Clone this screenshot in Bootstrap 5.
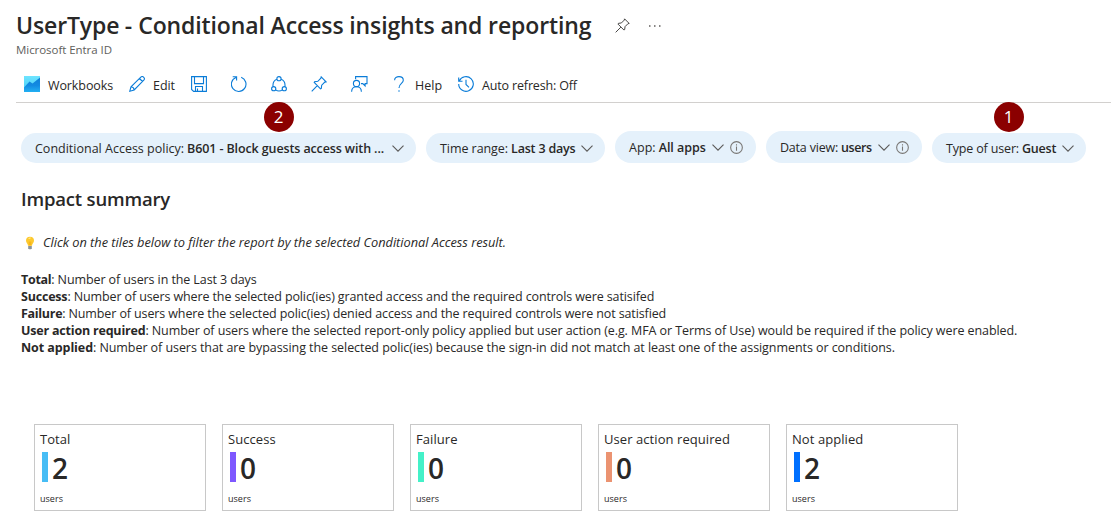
<!DOCTYPE html>
<html lang="en">
<head>
<meta charset="utf-8">
<meta name="viewport" content="width=device-width, initial-scale=1">
<title>UserType - Conditional Access insights and reporting</title>
<link href="https://cdn.jsdelivr.net/npm/bootstrap@5.3.0/dist/css/bootstrap.min.css" rel="stylesheet">
<style>
  body { font-family: "Open Sans", "Noto Sans", sans-serif; font-size: 12.5px; line-height: 17px; color: #292827; background: #fff; overflow: hidden; }
  svg { display: block; flex: none; fill: none; stroke: #0a7cd8; stroke-width: 1.1; }
  .page-head { padding: 8px 0 0 16px; }
  .page-title { font-size: 23px; line-height: 35px; font-weight: 600; letter-spacing: -.13px; margin: 0 24px 0 0; }
  .page-title i { font-style: normal; margin: 0 .5px 0 -.5px; }
  .page-sub { font-size: 11.5px; line-height: 14px; color: #605e5c; letter-spacing: -.05px; }
  .ink { stroke: #3b3a39; stroke-width: 1; }
  .commands { margin-left: 16px; padding-left: 8px; height: 35px; margin-top: 11px; border-bottom: 1px solid #d2d0ce; padding-bottom: 1px; }
  .cmd { background: none; border: 0; padding: 0; height: 32px; color: inherit; width: 40px; gap: 8px; white-space: nowrap; }
  .cmd span { padding-top: 2px; }
  .cmd-wb { width: 105px; letter-spacing: -.1px; }
  .cmd-ed { width: 62px; letter-spacing: -.05px; }
  .cmd-help { width: 67px; }
  .cmd-auto { width: 130px; letter-spacing: -.155px; }
  .filters { margin: 28px 0 0 21px; gap: 10px; height: 32px; }
  .pill { background: #e5f1fb; height: 30px; border-radius: 16px; padding: 0 0 0 14px; white-space: nowrap; position: relative; }
  .pill.tall { height: 32px; }
  .pill b { font-weight: 600; margin-left: 3px; }
  .pill svg { stroke: #5a5958; stroke-width: 1.1; }
  .pill .info { stroke: #797775; stroke-width: 1; margin-left: 6.500px; }
  .p1 { width: 395px; } .p1 b { letter-spacing: -.115px; } .p1 svg { margin-left: 8px; }
  .p2 { width: 179px; letter-spacing: -.06px; } .p2 b { letter-spacing: -.185px; } .p2 svg { margin-left: 5px; }
  .p3 { width: 141px; letter-spacing: .05px; } .p3 b { letter-spacing: -.05px; } .p3 .chev { margin-left: 6px; }
  .p4 { width: 156px; letter-spacing: -.2px; } .p4 b { letter-spacing: -.42px; } .p4 .chev { margin-left: 6px; }
  .p5 { width: 154px; letter-spacing: -.16px; } .p5 b { letter-spacing: -.2px; } .p5 svg { margin-left: 6px; }
  .marker { position: absolute; top: -31.500px; left: 242.500px; width: 30px; height: 30px; border-radius: 50%; background: #8b0000; color: #fff; font-size: 17px; line-height: 29px; text-align: center; letter-spacing: 0; }
  .p5 .marker { left: 61.500px; }
  .summary { padding-left: 21px; }
  .summary h2 { font-size: 18.5px; line-height: 26px; font-weight: 600; letter-spacing: -.18px; margin: 23px 0 0; }
  .tip { margin-top: 22px; font-size: 12.8px; font-style: italic; letter-spacing: -.02px; height: 17px; }
  .tip svg { stroke: none; margin: 0 5px 0 2px; }
  .legend-text { margin-top: 20px; white-space: nowrap; letter-spacing: -.115px; }
  .legend-text b { font-weight: 700; letter-spacing: -.2px; }
  .l1 { letter-spacing: -.1px; } .l1 b, .l3 b { letter-spacing: -.3px; }
  .l4 { letter-spacing: -.077px; } .l5 { letter-spacing: -.065px; } .l5 b { letter-spacing: -.08px; }
  .tiles { margin: 68px 0 0 34px; gap: 16px; }
  .tile { width: 172px; height: 87px; border: 1px solid #c8c8c8; padding: 6px 5px 0; font-size: 13px; letter-spacing: .07px; }
  .tile-val { height: 30px; margin: 4px 0 0 2px; font-size: 28px; font-weight: 600; line-height: 30px; gap: 4px; }
  .tile-val i { width: 6px; height: 30px; }
  .tile-val span { padding-top: 1px; }
  .tile-unit { font-size: 9px; line-height: 12px; margin-top: 11px; letter-spacing: .03px; }
  .c-total { background: #47bdf5; } .c-ok { background: #7e58ff; } .c-fail { background: #44f1c8; } .c-act { background: #eb9371; } .c-na { background: #0070ff; }
</style>
</head>
<body>
<svg class="d-none">
  <symbol id="pin" viewBox="0 0 16 16"><path d="M10.2.9 15.100 5.800 13.800 6.100 10.700 9.200 10.300 12.400 9.500 12.800 3.200 6.500 3.600 5.700 6.800 5.300 9.900 2.200ZM6.300 9.700.700 15.300"/></symbol>
  <symbol id="chev" viewBox="0 0 12 7"><path d="M.5.6 6 6.100 11.500.6"/></symbol>
  <symbol id="info" viewBox="0 0 12 12"><circle cx="6" cy="6" r="5.400"/><path d="M6 5v4M6 3v1.100"/></symbol>
</svg>

<header class="page-head">
  <div class="d-flex align-items-center">
    <h1 class="page-title">UserType <i>-</i> Conditional Access insights and reporting</h1>
    <svg class="ink" width="15" height="15"><use href="#pin"/></svg>
    <svg class="ms-3" width="16" height="4" viewBox="0 0 16 4"><path d="M3 2h1.500M8 2h1.500M13 2h1.500" stroke="#605e5c" stroke-width="1.300"/></svg>
  </div>
  <div class="page-sub">Microsoft Entra ID</div>
</header>

<nav class="commands d-flex">
  <button class="cmd cmd-wb d-flex align-items-center">
    <svg width="16" height="16" viewBox="0 0 16 16"><defs><linearGradient id="wb" x1="0" y1="0" x2="0" y2="1"><stop offset="0" stop-color="#6fe4ff"/><stop offset="1" stop-color="#3fcdf5"/></linearGradient><linearGradient id="wbArea" x1="0" y1="0" x2="0" y2="1"><stop offset="0" stop-color="#0f7fd8"/><stop offset=".55" stop-color="#128be2"/><stop offset="1" stop-color="#22b0f2"/></linearGradient></defs><path d="M0 0h16v16H0z" fill="url(#wb)" stroke="none"/><path d="M0 11.500 5.500 5.500 8.500 7.500 16 1.500V16H0Z" fill="url(#wbArea)" stroke="none"/></svg>
    <span>Workbooks</span></button>
  <button class="cmd cmd-ed d-flex align-items-center">
    <svg width="16" height="16" viewBox="0 0 16 16"><path d="M.8 15.200 2 10.800 11.800 1.200C13.800-.6 16.600 2.200 14.800 4.200L5.200 14ZM10.500 2.500 13.500 5.500M2 10.800C3.600 11 5 12.400 5.200 14"/></svg>
    <span>Edit</span></button>
  <button class="cmd d-flex align-items-center" aria-label="Save">
    <svg width="16" height="16" viewBox="0 0 16 16"><path d="M.6.6h14.800v14.800H2.600l-2-2ZM3.500.6v7h9v-7M4.500 15.400v-4.900h7v4.900M6.500 12.500v2.900"/></svg></button>
  <button class="cmd d-flex align-items-center" aria-label="Refresh">
    <svg width="16" height="16" viewBox="0 0 16 16"><path d="M10.200 1.300A7.300 7.300 0 1 1 4.900 1.400M1.700.7h3.900v3.900"/></svg></button>
  <button class="cmd d-flex align-items-center" aria-label="Share">
    <svg width="16" height="16" viewBox="0 0 16 16"><circle cx="8" cy="2.700" r="2.100"/><circle cx="2.700" cy="12.700" r="2.100"/><circle cx="13.300" cy="12.700" r="2.100"/><path d="M5.900 3.200C3.200 4.200 1.700 7 2 10.500M10.100 3.200C12.800 4.200 14.300 7 14 10.500M4.600 13.900Q8 16.200 11.400 13.900"/></svg></button>
  <button class="cmd d-flex align-items-center" aria-label="Pin">
    <svg width="16" height="16"><use href="#pin"/></svg></button>
  <button class="cmd d-flex align-items-center" aria-label="Feedback">
    <svg width="17" height="16" viewBox="0 0 17 16"><circle cx="5.500" cy="7.500" r="3.100"/><path d="M.6 15.700C.8 9 10.200 9 10.400 15.700M4.600 3.200V.6H16v7H14.100V9.900L11.800 7.600H10"/></svg></button>
  <button class="cmd cmd-help d-flex align-items-center">
    <svg width="16" height="16" viewBox="0 0 16 16"><path d="M3.600 4.200C3.600-.6 12.300-.6 12.300 4.200 12.300 7.500 8 7.300 8 12M8 14.300v1.500"/></svg>
    <span>Help</span></button>
  <button class="cmd cmd-auto d-flex align-items-center">
    <svg width="16" height="16" viewBox="0 0 16 16"><path d="M1.300 5.100A7.300 7.300 0 1 1 .7 8M.7 1.500V5.200H4.500M8 3.800V8.500L11 11.300"/></svg>
    <span>Auto refresh: Off</span></button>
</nav>

<div class="filters d-flex align-items-end">
  <div class="pill p1 d-flex align-items-center">Conditional Access policy:<b>B601 - Block guests access with ...</b><svg class="chev" width="12" height="7"><use href="#chev"/></svg><span class="marker">2</span></div>
  <div class="pill p2 d-flex align-items-center">Time range:<b>Last 3 days</b><svg class="chev" width="12" height="7"><use href="#chev"/></svg></div>
  <div class="pill tall p3 d-flex align-items-center">App:<b>All apps</b><svg class="chev" width="12" height="7"><use href="#chev"/></svg><svg class="info" width="13" height="13"><use href="#info"/></svg></div>
  <div class="pill tall p4 d-flex align-items-center">Data view:<b>users</b><svg class="chev" width="12" height="7"><use href="#chev"/></svg><svg class="info" width="13" height="13"><use href="#info"/></svg></div>
  <div class="pill p5 d-flex align-items-center">Type of user:<b>Guest</b><svg class="chev" width="12" height="7"><use href="#chev"/></svg><span class="marker">1</span></div>
</div>

<section class="summary">
  <h2>Impact summary</h2>
  <div class="tip d-flex align-items-center">
    <svg width="15" height="14" viewBox="0 0 15 14"><path d="M7 .8a4 4 0 0 0-4 4C3 6.900 4.900 7.600 5 9.800h4C9.100 7.600 11 6.900 11 4.800a4 4 0 0 0-4-4Z" fill="#fdc92e"/><path d="M5.600 3a2 2 0 0 1 2-1" stroke="#fff3b0" stroke-width="1"/><path d="M6.300 5.500v4M7.700 5.500v4" stroke="#f5a300" stroke-width=".6"/><path d="M5.200 10h3.600v2.300L8 13.200H6l-.8-.9Z" fill="#8b9399"/></svg>
    <span>Click on the tiles below to filter the report by the selected Conditional Access result.</span>
  </div>
  <div class="legend-text">
    <div class="l1"><b>Total</b>: Number of users in the Last 3 days</div>
    <div class="l2"><b>Success</b>: Number of users where the selected polic(ies) granted access and the required controls were satisifed</div>
    <div class="l3"><b>Failure</b>: Number of users where the selected polic(ies) denied access and the required controls were not satisfied</div>
    <div class="l4"><b>User action required</b>: Number of users where the selected report-only policy applied but user action (e.g. MFA or Terms of Use) would be required if the policy were enabled.</div>
    <div class="l5"><b>Not applied</b>: Number of users that are bypassing the selected polic(ies) because the sign-in did not match at least one of the assignments or conditions.</div>
  </div>
</section>

<div class="tiles d-flex">
  <div class="tile"><div>Total</div><div class="tile-val d-flex"><i class="c-total"></i><span>2</span></div><div class="tile-unit">users</div></div>
  <div class="tile"><div>Success</div><div class="tile-val d-flex"><i class="c-ok"></i><span>0</span></div><div class="tile-unit">users</div></div>
  <div class="tile"><div>Failure</div><div class="tile-val d-flex"><i class="c-fail"></i><span>0</span></div><div class="tile-unit">users</div></div>
  <div class="tile"><div>User action required</div><div class="tile-val d-flex"><i class="c-act"></i><span>0</span></div><div class="tile-unit">users</div></div>
  <div class="tile"><div>Not applied</div><div class="tile-val d-flex"><i class="c-na"></i><span>2</span></div><div class="tile-unit">users</div></div>
</div>
<script src="https://cdn.jsdelivr.net/npm/bootstrap@5.3.0/dist/js/bootstrap.bundle.min.js"></script>
</body>
</html>
